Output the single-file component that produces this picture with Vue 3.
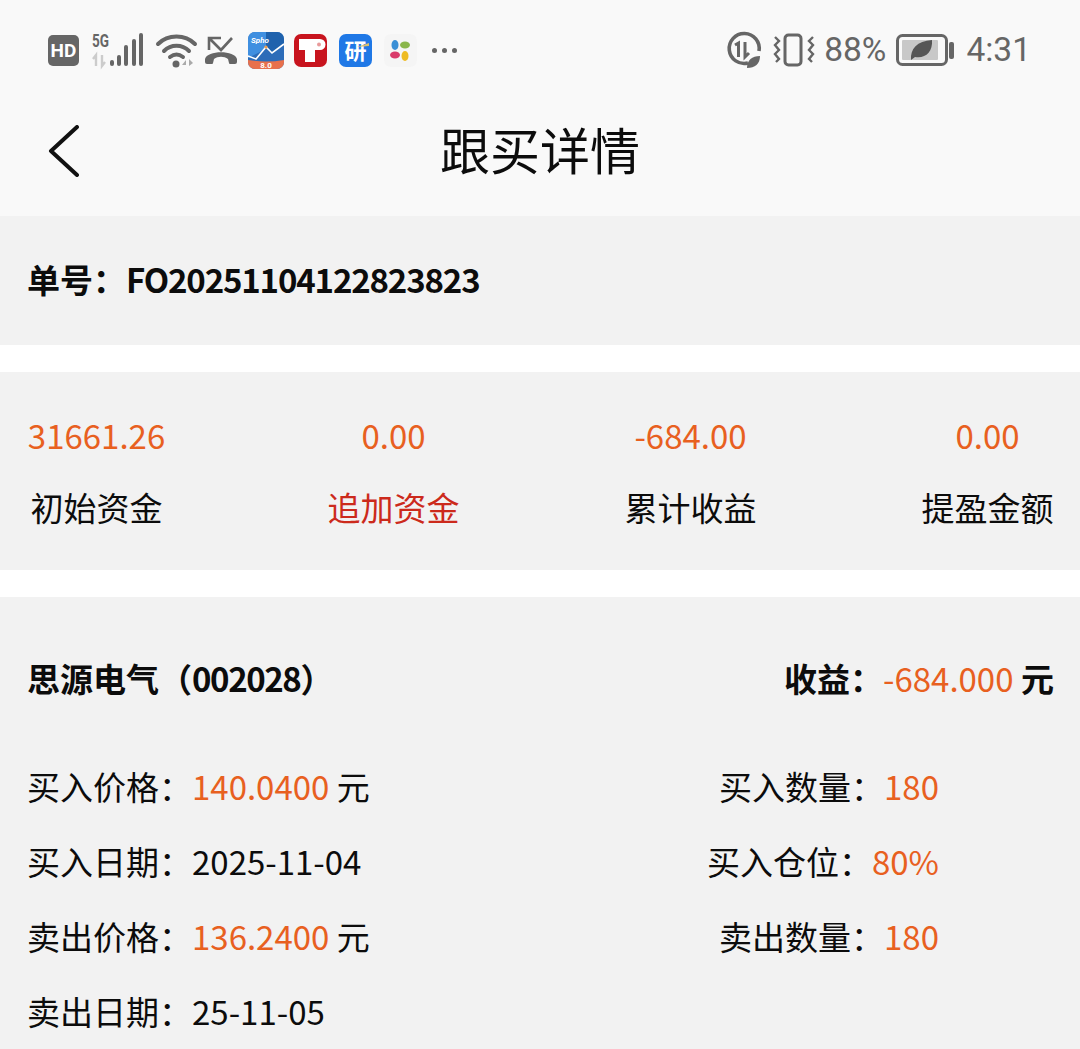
<script setup>
const stats = [
  { value: '31661.26', label: '初始资金' },
  { value: '0.00', label: '追加资金', red: true },
  { value: '-684.00', label: '累计收益' },
  { value: '0.00', label: '提盈金额' },
]
</script>

<template>
  <div class="page">
    <div class="status">
      <div class="status-left">
        <svg class="ic" width="33" height="33" viewBox="0 0 33 33"><rect x="1" y="1" width="31" height="31" rx="5" fill="#666"/><text x="16.5" y="23" text-anchor="middle" class="hd">HD</text></svg>
        <svg class="ic" width="56" height="36" viewBox="0 0 56 36" style="margin-left:11px"><text x="1" y="15" textLength="17" lengthAdjust="spacingAndGlyphs" class="fiveg">5G</text><path d="M5 34V23l-3 4M11 23v11l3-4" fill="none" stroke="#ccc" stroke-width="2.4"/><rect x="19" y="28" width="4" height="6" rx="2" fill="#666"/><rect x="26" y="23" width="4" height="11" rx="2" fill="#666"/><rect x="33" y="13" width="4" height="21" rx="2" fill="#666"/><rect x="41" y="7" width="4" height="27" rx="2" fill="#666"/><rect x="48" y="1" width="4" height="33" rx="2" fill="#666"/></svg>
        <svg class="ic" width="42" height="36" viewBox="0 0 42 36" style="margin-left:9px"><path d="M2 12C12 2 29 2 39 12M8 19c7-7 18-7 25 0M14 25c4-3 9-3 13 0" fill="none" stroke="#666" stroke-width="4" stroke-linecap="round"/><circle cx="20" cy="32" r="3.5" fill="#666"/><path d="M26 33l4-5v5zM33 27v7l4-3z" fill="#aaa"/></svg>
        <svg class="ic" width="36" height="34" viewBox="0 0 36 34" style="margin-left:6px"><path d="M17 5H5v12M5 5l12 12L28 5" fill="none" stroke="#666" stroke-width="2.6"/><path d="M1 26C3 17 31 17 33 26L33 29Q33 31 31 31L26 31Q25 31 25 30L24 26C20 23 14 23 10 26L9 30Q9 31 8 31L3 31Q1 31 1 29Z" fill="#666"/></svg>
        <svg class="ic" width="36" height="37" viewBox="0 0 36 37" style="margin-left:8px"><rect width="36" height="37" rx="7" fill="#2c6cb8"/><path d="M0 7a7 7 0 0 1 7-7h11v17L0 26z" fill="#3f8fe0"/><path d="M18 0h11a7 7 0 0 1 7 7v6L24 21l-6-5z" fill="#1f62ad"/><path d="M0 24l8 3 10-12 6 6 12-9" fill="none" stroke="#fff" stroke-width="1.6"/><circle cx="18" cy="15" r="1.6" fill="#f0a050"/><path d="M0 28q18 3 36 0v2a7 7 0 0 1-7 7H7a7 7 0 0 1-7-7z" fill="#e8704c"/><text x="18" y="36" text-anchor="middle" class="ver">8.0</text><text x="3" y="11" class="sp">Spho</text></svg>
        <svg class="ic" width="33" height="33" viewBox="0 0 33 33" style="margin-left:10px"><rect width="33" height="33" rx="7" fill="#c8141e"/><path d="M5 5h21a5.5 5.5 0 0 1 0 11h-5v12H11V16H5z" fill="#fff"/><circle cx="25" cy="10.500" r="2" fill="#e89a9a"/></svg>
        <svg class="ic" width="33" height="33" viewBox="0 0 33 33" style="margin-left:12px"><rect width="33" height="33" rx="7" fill="#1f78e6"/><text x="16.500" y="25" text-anchor="middle" class="yan">研</text><path d="M18 13l12-4v3z" fill="#d8c070"/></svg>
        <svg class="ic" width="33" height="33" viewBox="0 0 33 33" style="margin-left:12px"><rect width="33" height="33" rx="7" fill="#f5f5f5"/><ellipse cx="11" cy="11" rx="3.500" ry="5" fill="#3a8fd6"/><ellipse cx="21" cy="11" rx="5" ry="3.500" fill="#8ab64a"/><ellipse cx="11" cy="21" rx="5" ry="3.500" fill="#d93a6a"/><ellipse cx="21" cy="22" rx="3.500" ry="5" fill="#eebb22"/></svg>
        <div class="dots"><i></i><i></i><i></i></div>
      </div>
      <div class="status-right">
        <svg class="ic" width="38" height="38" viewBox="0 0 38 38"><path d="M23 32a15 15 0 1 1 11-12" fill="none" stroke="#666" stroke-width="3.600"/><path d="M10 14l3.500-2v14M20 11v15l4-4" fill="none" stroke="#666" stroke-width="3"/><path d="M22 37c0-8 5-12 13-12 0 8-5 12-13 12z" fill="#666"/></svg>
        <svg class="ic" width="44" height="34" viewBox="0 0 44 34" style="margin-left:9px"><path d="M3 4l4 4-4 4 4 5-4 4 4 5-3 3M41 4l-4 4 4 4-4 5 4 4-4 5 3 3" fill="none" stroke="#666" stroke-width="2.4"/><rect x="13" y="2" width="16" height="30" rx="3.500" fill="none" stroke="#666" stroke-width="3"/></svg>
        <span class="pct">88%</span>
        <svg class="ic" width="59" height="32" viewBox="0 0 59 32" style="margin-left:10px"><rect x="1.500" y="1.500" width="49" height="29" rx="5" fill="none" stroke="#666" stroke-width="3"/><rect x="6" y="6" width="36" height="20" rx="1" fill="#c8c8c8"/><rect x="53" y="8" width="5" height="17" rx="2" fill="#666"/><path d="M15 26c-1-11 6-19 21-20 1 12-7 19-17 17l-4 3z" fill="#555"/></svg>
        <span class="time">4:31</span>
      </div>
    </div>

    <header class="nav">
      <svg class="back" width="32" height="52" viewBox="0 0 32 52"><path d="M29 2L3 26l26 24" fill="none" stroke="#111" stroke-width="4" stroke-linecap="round" stroke-linejoin="round"/></svg>
      <h1 class="title">跟买详情</h1>
    </header>

    <section class="order">单号：<span class="narrow">FO20251104122823823</span></section>

    <section class="stats">
      <div v-for="s in stats" :key="s.label" class="stat">
        <div class="stat-value">{{ s.value }}</div>
        <div class="stat-label" :class="{ red: s.red }">{{ s.label }}</div>
      </div>
    </section>

    <section class="detail">
      <div class="head">
        <span>思源电气（<span class="narrow-b">002028</span>）</span>
        <span>收益：<em class="num">-684.000</em> 元</span>
      </div>
      <div class="rows">
        <div class="row"><span>买入价格：<em>140.0400</em> 元</span><span class="right">买入数量：<em>180</em></span></div>
        <div class="row"><span>买入日期：2025-11-04</span><span class="right">买入仓位：<em>80%</em></span></div>
        <div class="row"><span>卖出价格：<em>136.2400</em> 元</span><span class="right">卖出数量：<em>180</em></span></div>
        <div class="row"><span>卖出日期：25-11-05</span></div>
      </div>
    </section>
  </div>
</template>

<style>
html, body { margin: 0; background: #fff; }
</style>

<style scoped>
.page {
  width: 1080px;
  height: 1049px;
  overflow: hidden;
  background: #fff;
  font-family: "Noto Sans CJK SC", "Noto Sans", sans-serif;
  color: #0c0c0c;
}
.status {
  height: 100px;
  background: #f9f9f9;
  box-sizing: border-box;
  padding: 0 49px 0 47px;
  display: flex;
  justify-content: space-between;
  align-items: center;
}
.status-left, .status-right { display: flex; align-items: center; }
.ic { display: block; flex: none; overflow: visible; }
.hd { font: 700 19px "Roboto", sans-serif; fill: #fff; }
.fiveg { font: 700 18px "Roboto", sans-serif; fill: #666; }
.ver { font: 700 8px "Roboto", sans-serif; fill: #fff; }
.sp { font: italic 700 8px "Roboto", sans-serif; fill: #fff; }
.yan { font: 700 22px "Noto Sans CJK SC", sans-serif; fill: #fff; }
.dots { display: flex; gap: 5px; margin-left: 15px; }
.dots i { width: 5px; height: 5px; border-radius: 50%; background: #666; }
.pct, .time { font-family: "Roboto", sans-serif; font-size: 33.500px; color: #666; line-height: 1; }
.pct { margin-left: 8px; }
.time { margin-left: 11px; }
.nav {
  height: 116px;
  box-sizing: border-box;
  padding-bottom: 20px;
  background: #f9f9f9;
  position: relative;
  display: flex;
  align-items: center;
  justify-content: center;
}
.back { position: absolute; left: 48px; top: 25px; }
.title { margin: 0; font-size: 50px; font-weight: 400; line-height: 1; color: #0c0c0c; }
.order {
  height: 129px;
  background: #f2f2f2;
  box-sizing: border-box;
  padding: 0 27px 4px;
  display: flex;
  align-items: center;
  font-size: 33px;
  font-weight: 700;
}
.narrow { letter-spacing: -1.150px; }
.narrow-b { letter-spacing: -1.400px; }
.stats {
  margin-top: 27px;
  height: 198px;
  background: #f2f2f2;
  box-sizing: border-box;
  padding: 0 26px 0 30px;
  display: flex;
  justify-content: space-between;
  align-items: center;
}
.stat { width: 133px; display: flex; flex-direction: column; align-items: center; }
.stat-value { font-size: 33px; color: #e8601f; line-height: 44px; white-space: nowrap; }
.stat-label { font-size: 33px; line-height: 44px; margin-top: 28px; white-space: nowrap; }
.stat-label.red { color: #cc2a1c; }
.detail {
  margin-top: 27px;
  background: #f2f2f2;
  height: 452px;
  box-sizing: border-box;
  padding: 59px 26px 0 27px;
}
.head {
  height: 44px;
  display: flex;
  justify-content: space-between;
  align-items: center;
  font-size: 33px;
  font-weight: 700;
}
.head .num { font-style: normal; font-weight: 400; color: #e8601f; }
.rows { display: flex; flex-direction: column; margin-top: 48px; }
.row {
  height: 75px;
  display: flex;
  justify-content: space-between;
  align-items: center;
  font-size: 33px;
  padding-right: 115px;
}
.row em { font-style: normal; color: #e8601f; }
</style>
